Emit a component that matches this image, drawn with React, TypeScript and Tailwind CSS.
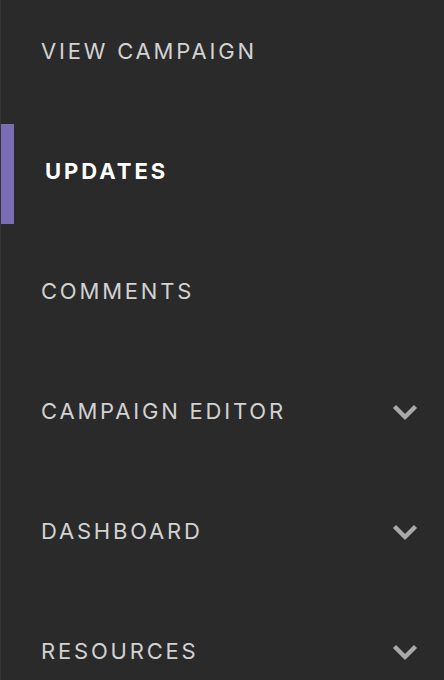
const ITEMS = [
  { label: "VIEW CAMPAIGN", active: false, sub: false },
  { label: "UPDATES", active: true, sub: false },
  { label: "COMMENTS", active: false, sub: false },
  { label: "CAMPAIGN EDITOR", active: false, sub: true },
  { label: "DASHBOARD", active: false, sub: true },
  { label: "RESOURCES", active: false, sub: true },
];

function Chevron() {
  return (
    <svg width="26" height="18" viewBox="0 0 26 18" fill="none">
      <polyline points="2.5,2.5 13,13 23.5,2.5" stroke="#a9a9a9" strokeWidth="4.4" strokeLinecap="butt" strokeLinejoin="miter" />
    </svg>
  );
}

export default function App() {
  return (
    <div className="w-[444px] h-[680px] overflow-hidden bg-[#2a2a2a] border-l border-[#353535]" style={{ fontFamily: "Inter, 'Open Sans', sans-serif" }}>
      <nav className="flex flex-col gap-[20px] pt-[4px]">
        {ITEMS.map((it) => (
          <a
            key={it.label}
            href="#"
            className={
              it.active
                ? "-ml-px flex h-[100px] items-center border-l-[14px] border-[#7b6db3] pl-[31px] pr-[26px] pb-[5px] text-[22px] font-bold tracking-[3px] text-white"
                : "flex h-[100px] items-center pl-[40px] pr-[26px] pb-[5px] text-[22px] font-normal tracking-[2.8px] text-[#d2d2d2]"
            }
          >
            <span className="flex-1">{it.label}</span>
            {it.sub && (
              <span className="mt-[3px]">
                <Chevron />
              </span>
            )}
          </a>
        ))}
      </nav>
    </div>
  );
}
